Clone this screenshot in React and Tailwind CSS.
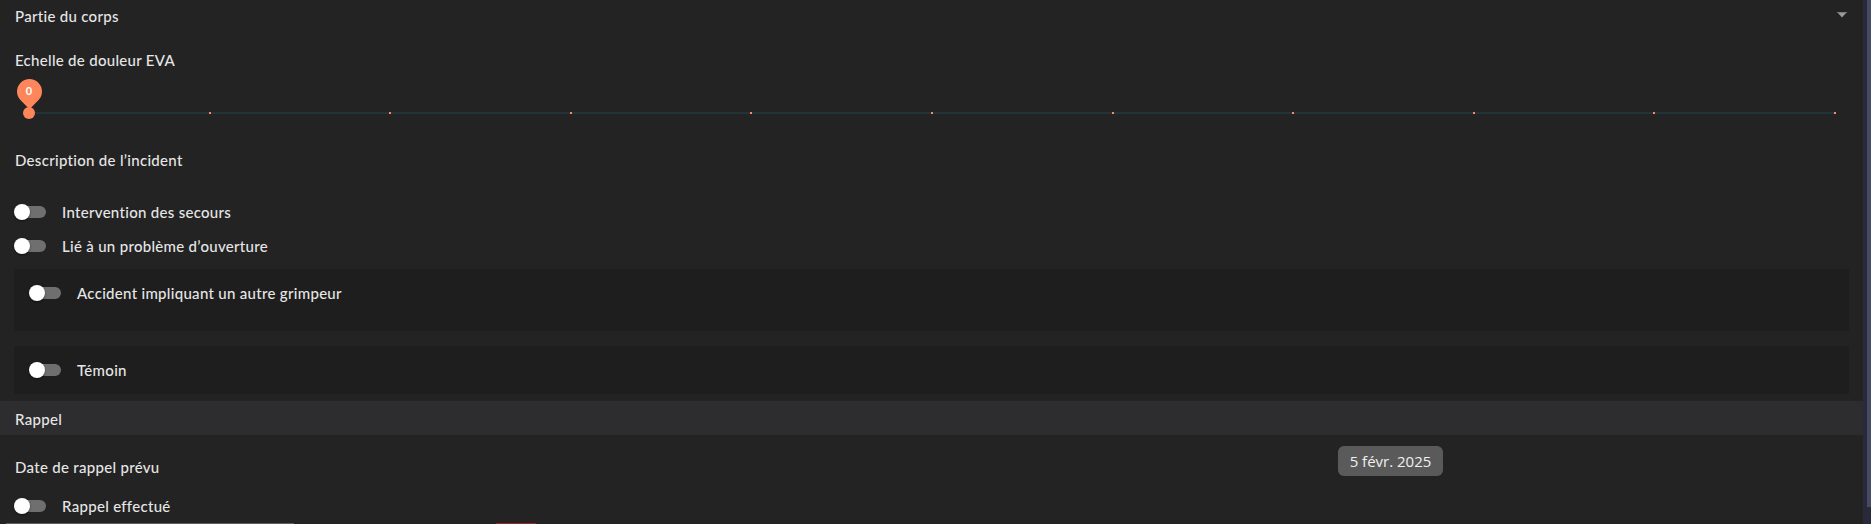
import React from "react";

const T = "text-[15px] leading-[20px] tracking-[0.3px] font-medium text-[#e6e6e6]";

function Toggle() {
  return (
    <div className="relative w-[32px] h-[16px] shrink-0">
      <div className="absolute left-[3px] right-0 top-[2px] bottom-[2px] rounded-full bg-[#6f6f6f]" />
      <div className="absolute left-0 top-0 w-[16px] h-[16px] rounded-full bg-white shadow-[0_1px_2px_rgba(0,0,0,0.5)]" />
    </div>
  );
}

function ToggleRow({ label, className = "" }) {
  return (
    <div className={"flex items-center gap-[16px] h-[34px] " + className}>
      <Toggle />
      <span className={T}>{label}</span>
    </div>
  );
}

export default function App() {
  const ticks = Array.from({ length: 11 });
  return (
    <div
      className="w-[1871px] h-[524px] overflow-hidden flex bg-[#232323]"
      style={{ fontFamily: "Lato, 'Noto Sans', sans-serif" }}
    >
      <div className="flex-1 flex flex-col min-w-0">
        {/* Partie du corps */}
        <div className="h-[32px] flex items-center justify-between pl-[15px] pr-[16px]">
          <span className={T}>Partie du corps</span>
          <svg width="10" height="6" viewBox="0 0 10 6" className="mt-[-2px]">
            <rect x="0" y="0" width="10" height="1" fill="#7a7a7a" />
            <path d="M1 1 L9 1 L5 5.5 Z" fill="#9a9a9a" />
          </svg>
        </div>

        {/* Echelle */}
        <div className="mt-[16px] h-[24px] flex items-center pl-[15px]">
          <span className={T}>Echelle de douleur EVA</span>
        </div>

        {/* Slider */}
        <div className="relative h-[50px]">
          <div className="absolute left-[29px] w-[1806px] top-[40px] h-[2px] bg-[#1f3338]" />
          <div className="absolute left-[28px] w-[1808px] top-[40px] h-[2px] flex justify-between">
            {ticks.map((_, i) => (
              <div key={i} className="w-[2px] h-[2px] bg-[#ff8a5c]" />
            ))}
          </div>
          <div className="absolute left-[23px] top-[35px] w-[12px] h-[12px] rounded-full bg-[#ff865a]" />
          <div className="absolute left-[16.5px] top-[7px] w-[25px] h-[25px] rotate-45 rounded-[50%_50%_0_50%] bg-[#ff865a]" />
          <div className="absolute left-[16.5px] top-[7px] w-[25px] h-[25px] flex items-center justify-center text-[11px] font-bold text-white">
            0
          </div>
        </div>

        {/* Description */}
        <div className="mt-[26px] h-[24px] flex items-center pl-[15px]">
          <span className={T}>Description de l’incident</span>
        </div>

        <ToggleRow label="Intervention des secours" className="mt-[23px] pl-[14px]" />
        <ToggleRow label="Lié à un problème d’ouverture" className="pl-[14px]" />

        <div className="mt-[7px] mx-[14px] h-[62px] bg-[#1e1e1e] pt-[7px] pl-[15px]">
          <ToggleRow label="Accident impliquant un autre grimpeur" />
        </div>

        <div className="mt-[15px] mx-[14px] h-[48px] bg-[#1e1e1e] pt-[7px] pl-[15px]">
          <ToggleRow label="Témoin" />
        </div>

        {/* Rappel header */}
        <div className="mt-[7px] h-[34px] bg-[#2d2d2f] flex items-center pl-[15px] pt-[1px]">
          <span className={T}>Rappel</span>
        </div>

        <div className="mt-[11px] flex items-start pl-[15px]">
          <span className={"w-[1323px] pt-[11px] " + T}>Date de rappel prévu</span>
          <div
            className="h-[30px] w-[105px] rounded-[6px] bg-[#5a5a5a] flex items-center justify-center text-[15px] text-[#f0f0f0]"
            style={{ fontFamily: "'Open Sans', 'Noto Sans', sans-serif" }}
          >
            5 févr. 2025
          </div>
        </div>

        <ToggleRow label="Rappel effectué" className="mt-[12px] pl-[14px]" />

        <div className="h-[1px] flex">
          <div className="ml-[6px] w-[288px] bg-[#5f5f5f]" />
          <div className="ml-[202px] w-[40px] bg-[#a0242c]" />
        </div>
      </div>

      {/* scrollbar */}
      <div className="w-[8px] flex">
        <div className="w-[4px] bg-[#282a3a]" />
        <div className="w-[4px] flex flex-col">
          <div className="h-[507px] bg-[#464a63]" />
          <div className="flex-1 bg-[#282a3a]" />
        </div>
      </div>
    </div>
  );
}
